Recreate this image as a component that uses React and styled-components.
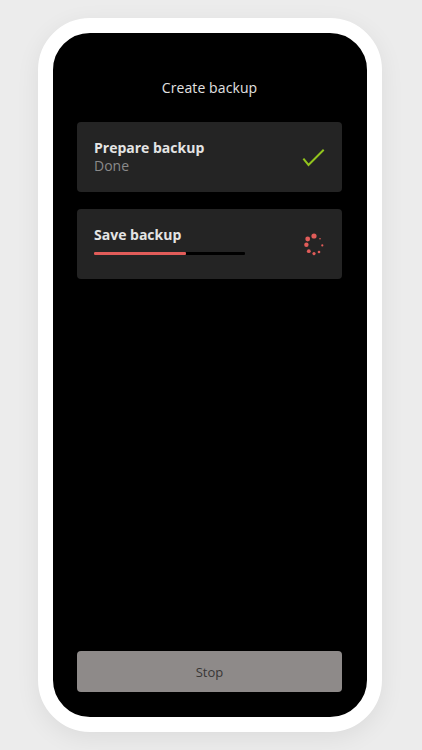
import React from 'react';
import styled, { createGlobalStyle } from 'styled-components';

const GlobalStyle = createGlobalStyle`
  html, body {
    margin: 0;
    padding: 0;
    background: #ececec;
    font-family: "Open Sans", "Noto Sans", sans-serif;
  }
`;

const Page = styled.div`
  width: 422px;
  height: 750px;
  padding: 18px 0 0 38px;
  box-sizing: border-box;
  display: flex;
`;

const Phone = styled.div`
  width: 344px;
  height: 714px;
  box-sizing: border-box;
  border: 15px solid #fff;
  border-radius: 52px;
  background: #000;
  box-shadow: 0 6px 24px rgba(0, 0, 0, 0.07);
  display: flex;
  flex-direction: column;
  padding: 45px 25px 25px 24px;
`;

const Title = styled.h1`
  margin: 0;
  font-size: 14px;
  font-weight: 400;
  line-height: 20px;
  color: #e2e2e2;
  text-align: center;
  letter-spacing: 0.1px;
`;

const Steps = styled.div`
  display: flex;
  flex-direction: column;
  gap: 17px;
  margin-top: 24px;
  flex: 1;
`;

const Card = styled.div`
  height: 70px;
  box-sizing: border-box;
  background: #242424;
  border-radius: 4px;
  display: flex;
  align-items: center;
  justify-content: space-between;
  padding: 0 17px;
`;

const Text = styled.div`
  display: flex;
  flex-direction: column;
`;

const StepName = styled.div`
  font-size: 14px;
  font-weight: 700;
  line-height: 18px;
  color: #e4e4e4;
`;

const StepStatus = styled.div`
  font-size: 14px;
  line-height: 18px;
  color: #8a8a8a;
`;

const Track = styled.div`
  width: 151px;
  height: 3px;
  background: #000;
  margin-top: 8px;
  margin-bottom: 7px;
  border-radius: 1px;
`;

const Fill = styled.div`
  height: 100%;
  background: #e15c59;
  border-radius: 1px;
`;

const StopButton = styled.button`
  height: 41px;
  border: none;
  border-radius: 4px;
  background: #8e8a89;
  color: #383636;
  font-family: "Open Sans", "Noto Sans", sans-serif;
  font-size: 13px;
  cursor: pointer;
`;

const Check = () => (
  <svg width="24" height="20" viewBox="0 0 24 20" style={{ marginRight: -1, marginTop: 1 }}>
    <path d="M2 11.5 L6.5 17 L21 2.5" fill="none" stroke="#92c41d" strokeWidth="2" strokeLinecap="square" />
  </svg>
);

const dots = [
  [0, 0, 2.6],
  [-6.3, 3, 2.4],
  [-7.6, 8.8, 2.2],
  [-5.2, 15.2, 1.9],
  [0, 17.6, 1.6],
  [5, 16, 1.3],
  [8.3, 9.4, 1.1],
  [6, 2.8, 0.8],
];

const Spinner = () => (
  <svg width="24" height="26" viewBox="-11 -3 24 26" style={{ marginRight: -2, marginTop: 4 }}>
    {dots.map(([x, y, r], i) => (
      <circle key={i} cx={x} cy={y} r={r} fill="#e15c59" />
    ))}
  </svg>
);

export default function App() {
  const progress = 0.61;
  return (
    <>
      <GlobalStyle />
      <Page>
        <Phone>
          <Title>Create backup</Title>
          <Steps>
            <Card>
              <Text>
                <StepName>Prepare backup</StepName>
                <StepStatus>Done</StepStatus>
              </Text>
              <Check />
            </Card>
            <Card>
              <Text>
                <StepName>Save backup</StepName>
                <Track>
                  <Fill style={{ width: `${progress * 100}%` }} />
                </Track>
              </Text>
              <Spinner />
            </Card>
          </Steps>
          <StopButton>Stop</StopButton>
        </Phone>
      </Page>
    </>
  );
}
